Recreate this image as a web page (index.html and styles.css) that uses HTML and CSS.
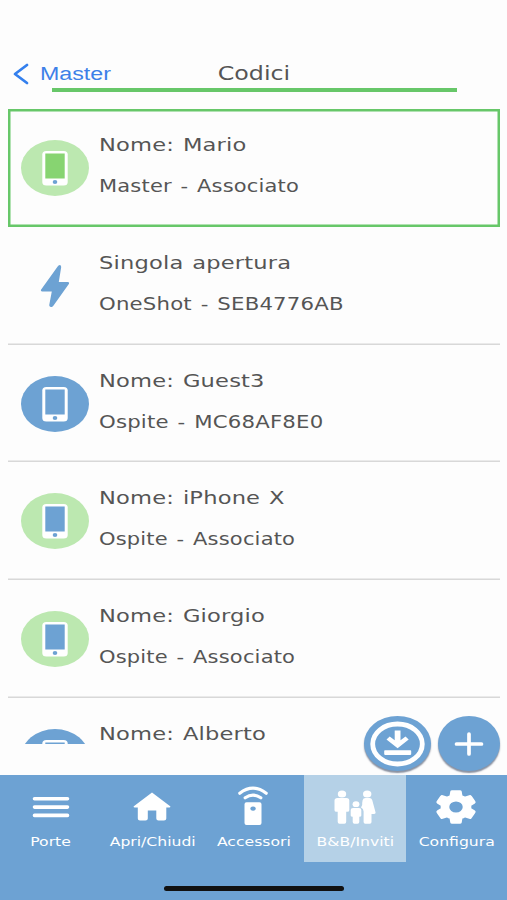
FILE: index.html
```html
<!DOCTYPE html>
<html lang="it">
<head>
<meta charset="utf-8">
<title>Codici</title>
<link rel="stylesheet" href="styles.css">
</head>
<body>
<svg class="defs" width="0" height="0">
  <symbol id="phone" viewBox="0 0 68 56">
    <ellipse class="disc" cx="34" cy="28" rx="34" ry="28"/>
    <rect class="case" x="21.3" y="11" width="25.4" height="34.6" rx="4" ry="3.5"/>
    <rect class="screen" x="24.3" y="13.5" width="19.4" height="25"/>
    <ellipse class="button" cx="34" cy="42" rx="2.3" ry="1.9"/>
  </symbol>
</svg>
<div class="app">
  <header class="header">
    <div class="back">
      <svg class="chevron" viewBox="0 0 16 22"><path d="M14 2 2 11 14 20"/></svg>
      <span class="back-label">Master</span>
    </div>
    <h1 class="title"><span class="title-text">Codici</span></h1>
    <div class="underline"></div>
  </header>
  <main class="list">
    <section class="row selected">
      <svg class="icon master"><use href="#phone"/></svg>
      <div class="info"><span class="name">Nome: Mario</span><span class="detail">Master - Associato</span></div>
    </section>
    <section class="row">
      <svg class="icon" viewBox="0 0 68 56"><path class="bolt" d="M37.2 7.8 20 31.8Q19.2 33.6 21.2 33.6L30.8 33.6 28.2 47.3Q28.8 50.3 32 48.2L48 25.8Q48.8 24 46.8 24L37.8 24 40.2 9Q39.8 5.6 37.2 7.8Z"/></svg>
      <div class="info"><span class="name">Singola apertura</span><span class="detail code">OneShot - SEB4776AB</span></div>
    </section>
    <section class="row">
      <svg class="icon guest"><use href="#phone"/></svg>
      <div class="info"><span class="name">Nome: Guest3</span><span class="detail code">Ospite - MC68AF8E0</span></div>
    </section>
    <section class="row">
      <svg class="icon linked"><use href="#phone"/></svg>
      <div class="info"><span class="name">Nome: iPhone X</span><span class="detail">Ospite - Associato</span></div>
    </section>
    <section class="row">
      <svg class="icon linked"><use href="#phone"/></svg>
      <div class="info"><span class="name">Nome: Giorgio</span><span class="detail">Ospite - Associato</span></div>
    </section>
    <section class="row">
      <svg class="icon guest"><use href="#phone"/></svg>
      <div class="info"><span class="name">Nome: Alberto</span></div>
    </section>
  </main>
  <div class="actions">
    <div class="fab import">
      <svg viewBox="0 0 67 56"><ellipse class="ring" cx="33.5" cy="28" rx="24.8" ry="20"/><path class="arrow" d="M30.7 14.5h5.8v9.8l5-3.7 3.2 3-11.1 8.6-11.1-8.6 3.2-3 5 3.7Z"/><rect class="glyph" x="20.2" y="34.3" width="27" height="4.6" rx=".8"/></svg>
    </div>
    <div class="fab add">
      <svg viewBox="0 0 62 56"><path class="plus" d="M18.5 28h25M31 18v20"/></svg>
    </div>
  </div>
  <nav class="tabs">
    <div class="tab">
      <svg class="tab-icon" viewBox="0 0 48 48"><path class="menu" d="M7.5 16.8h33M7.5 25.1h33M7.5 33.4h33"/></svg>
      <span class="tab-label">Porte</span>
    </div>
    <div class="tab">
      <svg class="tab-icon" viewBox="0 0 48 48"><path class="glyph" d="M24 10.4 42.2 24.3Q43 25.4 41.5 25.5H38.3V36.5Q38.3 38.5 36 38.5H30.5Q28.3 38.5 28.3 36.5V28.4H19.8V36.5Q19.8 38.5 17.5 38.5H12Q9.8 38.5 9.8 36.5V25.5H6.5Q5 25.4 5.8 24.3Z"/></svg>
      <span class="tab-label">Apri/Chiudi</span>
    </div>
    <div class="tab">
      <svg class="tab-icon" viewBox="0 0 48 48"><path class="wave" d="M10.8 11.2Q24 1.2 37.2 11.2M16.2 15.8Q24 10.5 31.8 15.8"/><path class="glyph" fill-rule="evenodd" d="M17.5 20.2h13q2 0 2 2v18.8q0 2-2 2h-13q-2 0-2-2V22.2q0-2 2-2Zm6.5 4.2a2.7 2.2 0 1 0 .1 0Z"/></svg>
      <span class="tab-label">Accessori</span>
    </div>
    <div class="tab active">
      <svg class="tab-icon" viewBox="0 0 48 48">
        <g class="glyph"><ellipse cx="11" cy="11.9" rx="4.2" ry="3.5"/><path d="M6.5 16h9q2.8 0 2.8 2.5v9.7q0 1.5-2 1.5h-1.1v10q0 2-1.8 2H8.5q-1.8 0-1.8-2v-10H5.5q-2 0-2-1.5v-9.7Q3.5 16 6.5 16Z"/><ellipse cx="25" cy="22.2" rx="3.4" ry="2.9"/><path d="M22 26h6q2.3 0 2.3 2v5.4q0 1.4-2 1.4v5.1q0 1.8-1.7 1.8h-3.2q-1.7 0-1.7-1.8v-5.1q-2 0-2-1.4V28q0-2 2.3-2Z"/><ellipse cx="36.2" cy="11.9" rx="4.2" ry="3.5"/><path d="M34.5 16h4q2 0 2.7 2l3.4 12.5q.2 1.4-1.5 1.4h-2.6v8q0 1.8-1.7 1.8h-4.5q-1.7 0-1.7-1.8V29.5q0-3-2.6-4 1.8-2 1.2-4.4l.4-2.9q.6-2.2 2.9-2.2Z"/></g>
      </svg>
      <span class="tab-label">B&amp;B/Inviti</span>
    </div>
    <div class="tab">
      <svg class="tab-icon" viewBox="0 0 48 48"><path class="gear" fill-rule="evenodd" transform="translate(24 25) scale(1.92 1.6) translate(-12 -12)" d="M19.43 12.98c.04-.32.07-.64.07-.98s-.03-.66-.07-.98l2.11-1.65c.19-.15.24-.42.12-.64l-2-3.46c-.12-.22-.39-.3-.61-.22l-2.49 1c-.52-.4-1.08-.73-1.69-.98l-.38-2.65A.49.49 0 0 0 14 2h-4c-.25 0-.46.18-.49.42l-.38 2.65c-.61.25-1.17.59-1.69.98l-2.49-1c-.23-.09-.49 0-.61.22l-2 3.46c-.13.22-.07.49.12.64l2.11 1.65c-.04.32-.07.65-.07.98s.03.66.07.98l-2.11 1.65c-.19.15-.24.42-.12.64l2 3.46c.12.22.39.3.61.22l2.49-1c.52.4 1.08.73 1.69.98l.38 2.65c.03.24.24.42.49.42h4c.25 0 .46-.18.49-.42l.38-2.65c.61-.25 1.17-.59 1.69-.98l2.49 1c.23.09.49 0 .61-.22l2-3.46c.12-.22.07-.49-.12-.64l-2.11-1.65ZM12 16a4 4 0 1 1 0-8 4 4 0 0 1 0 8Z"/></svg>
      <span class="tab-label">Configura</span>
    </div>
    <div class="home-indicator"></div>
  </nav>
</div>
</body>
</html>
```
FILE: styles.css
```css
* { box-sizing: border-box; }
body { margin: 0; background: #fdfdfd; color: #555; font-family: "DejaVu Sans", Verdana, sans-serif; }
.defs { position: absolute; }
.app { position: relative; width: 507px; height: 900px; overflow: hidden; display: flex; flex-direction: column; }

.header { height: 109px; padding-top: 61px; display: grid; grid-template-columns: 203px 102px 1fr; grid-template-rows: 27px 4px; }
.back { display: flex; align-items: center; padding-left: 13px; color: #3d80e8; }
.chevron { width: 16px; height: 22px; margin-top: -1px; fill: none; stroke: #3480ee; stroke-width: 2.8; stroke-linecap: round; stroke-linejoin: round; }
.back-label { margin: -1px 0 0 11px; font: 18px/24px "Liberation Sans", Arial, sans-serif; transform: scaleX(1.29); transform-origin: left; }
.title { margin: 0; text-align: center; font-size: 19px; line-height: 24px; font-weight: 400; }
.title-text { display: inline-block; transform: scaleX(1.25); }
.underline { grid-column: 1 / -1; margin: 0 50px 0 52px; height: 3.5px; background: #67c769; }

.list { height: 635px; padding: 0 7px 0 8px; overflow: hidden; }
.row { height: 117.8px; display: flex; padding: 31px 0 0 13px; box-shadow: inset 0 -1.5px #d8d8d8; }
.row.selected { box-shadow: inset 0 0 0 2.5px #67c769; }
.icon { width: 68px; height: 56px; flex: none; }
.info { display: flex; flex-direction: column; align-items: flex-start; padding-left: 10px; margin-top: -7px; white-space: nowrap; }
.name { font-size: 18.5px; line-height: 24px; letter-spacing: .15px; word-spacing: 1.2px; transform: scaleX(1.22); transform-origin: left; }
.detail { margin-top: 17px; font-size: 17px; line-height: 24px; letter-spacing: .15px; word-spacing: 1.5px; transform: scaleX(1.235); transform-origin: left; }
.detail.code { transform: scaleX(1.25); }
.disc { fill: var(--disc); }
.case { fill: #fff; }
.screen { fill: var(--screen); }
.button, .bolt { fill: #6da2d3; }
.master { --disc: #bce8b0; --screen: #87d471; }
.linked { --disc: #bce8b0; --screen: #6da2d3; }
.guest { --disc: #6da2d3; --screen: #6da2d3; }

.actions { position: absolute; left: 364px; top: 716px; display: flex; gap: 7px; z-index: 2; }
.fab { height: 55px; border-radius: 50%; background: #6da2d3; box-shadow: 0 2px 1.5px #8890a0; }
.fab svg { display: block; width: 100%; height: 56px; }
.import { width: 67px; }
.add { width: 62px; }
.ring { fill: none; stroke: #fff; stroke-width: 4.8; }
.arrow, .glyph, .gear { fill: #fff; }
.gear { stroke: #fff; stroke-width: 1; stroke-linejoin: round; }
.plus { fill: none; stroke: #fff; stroke-width: 3.7; stroke-linecap: round; }

.tabs { margin-top: 31px; height: 125px; background: #6da2d3; display: grid; grid-template-columns: repeat(5, 1fr); grid-template-rows: 87px 38px; }
.tab { display: flex; flex-direction: column; align-items: center; padding-top: 7px; color: #fff; }
.active { background: #b5d1e7; }
.tab-icon { width: 48px; height: 48px; flex: none; }
.tab-label { font-size: 12.5px; line-height: 16px; margin-top: 4px; white-space: nowrap; transform: translateX(.3px) scaleX(1.25); }
.menu { fill: none; stroke: #fff; stroke-width: 3.6; stroke-linecap: round; }
.wave { fill: none; stroke: #fff; stroke-width: 3.2; stroke-linecap: round; }
.home-indicator { grid-column: 1 / -1; justify-self: center; width: 180px; height: 5.5px; margin-top: 23.5px; border-radius: 3px; background: #111; }
```
